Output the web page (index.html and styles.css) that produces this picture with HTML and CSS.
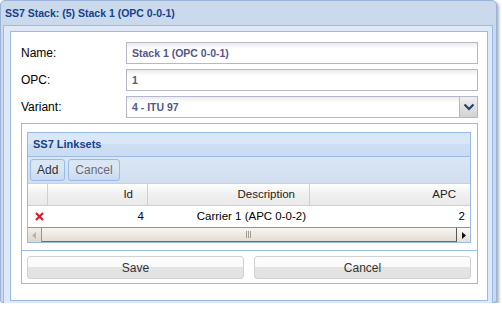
FILE: index.html
```html
<!DOCTYPE html>
<html lang="en">
<head>
  <meta charset="UTF-8">
  <title>SS7 Stack</title>
  <link rel="stylesheet" href="styles.css">
</head>
<body>
  <!-- Window -->
  <div class="window">
    <div class="window-header">SS7 Stack: (5) Stack 1 (OPC 0-0-1)</div>
    <div class="window-body">
      <div class="form-panel">
        <div class="form-row">
          <label class="form-label">Name:</label>
          <div class="field">Stack 1 (OPC 0-0-1)</div>
        </div>
        <div class="form-row">
          <label class="form-label">OPC:</label>
          <div class="field">1</div>
        </div>
        <div class="form-row">
          <label class="form-label">Variant:</label>
          <div class="field combo">
            <span class="combo-text">4 - ITU 97</span>
            <span class="combo-trigger">
              <svg width="12" height="8" viewBox="0 0 12 8"><path d="M1.5 1.5 L6 6 L10.5 1.5" fill="none" stroke="#24406e" stroke-width="2.2"/></svg>
            </span>
          </div>
        </div>

        <!-- Linksets box -->
        <div class="box">
          <div class="box-body">
            <div class="grid">
              <div class="grid-title">SS7 Linksets</div>
              <div class="grid-toolbar">
                <button class="tb-btn">Add</button>
                <button class="tb-btn disabled">Cancel</button>
              </div>
              <div class="grid-head">
                <div class="col col-icon"></div>
                <div class="col col-id">Id</div>
                <div class="col col-desc">Description</div>
                <div class="col col-apc">APC</div>
              </div>
              <div class="grid-row">
                <div class="cell col-icon">
                  <svg class="del" width="9" height="9" viewBox="0 0 9 9"><path d="M1 1 L8 8 M8 1 L1 8" stroke="#d4202a" stroke-width="2.2"/></svg>
                </div>
                <div class="cell col-id">4</div>
                <div class="cell col-desc">Carrier 1 (APC 0-0-2)</div>
                <div class="cell col-apc">2</div>
              </div>
              <div class="hscroll">
                <span class="sb-btn"><svg width="5" height="7" viewBox="0 0 5 7"><path d="M4 0 L0 3.5 L4 7 Z" fill="#b8b4ac"/></svg></span>
                <span class="sb-thumb"><span class="grip"></span></span>
                <span class="sb-btn right"><svg width="5" height="7" viewBox="0 0 5 7"><path d="M1 0 L5 3.5 L1 7 Z" fill="#111"/></svg></span>
              </div>
            </div>
          </div>
          <div class="box-foot">
            <button class="btn">Save</button>
            <button class="btn">Cancel</button>
          </div>
        </div>
      </div>
    </div>
  </div>
</body>
</html>
```

FILE: styles.css
```css
/* Global */
body {
  margin: 0;
  padding: 0;
  background: #fff;
  font-family: 'Liberation Sans', Arial, sans-serif;
  font-size: 12px;
}

/* Window frame */
.window {
  width: 495px;
  height: 301px;
  border: 1px solid #99b4d6;
  border-radius: 5px 5px 3px 3px;
  background: #cad9ec;
  box-shadow: 2px 2px 3px rgba(0, 0, 0, 0.3);
  display: flex;
  flex-direction: column;
}

.window-header {
  height: 24px;
  line-height: 25px;
  padding-left: 4px;
  font-weight: bold;
  font-size: 10.5px;
  color: #15428b;
}

.window-body {
  margin: 0 3px 2px 2px;
  border: 1px solid #99bbe8;
  background: #dfe8f6;
  padding: 5px 4px 6px 6px;
  flex: 1;
}

/* Form */
.form-panel {
  height: 258px;
  border: 1px solid #99bbe8;
  background: #fff;
  padding: 10px 9px 0 10px;
}

.form-row {
  display: flex;
  align-items: center;
  margin-bottom: 5px;
}

.form-label {
  width: 105px;
  color: #000;
  font-size: 12px;
}

.field {
  flex: 1;
  height: 20px;
  line-height: 20px;
  border: 1px solid #b5b8c8;
  padding-left: 5px;
  color: #55558a;
  font-size: 10.5px;
  font-weight: bold;
  background: linear-gradient(#ececec, #fff 6px);
}

.combo {
  display: flex;
  padding-right: 0;
}

.combo-text {
  flex: 1;
}

.combo-trigger {
  width: 17px;
  height: 20px;
  border-left: 1px solid #b5b8c8;
  background: linear-gradient(#f0f0f0, #d2d2d2);
  display: flex;
  align-items: center;
  justify-content: center;
}

/* Linksets box */
.box {
  border: 1px solid #99bbe8;
}

.box-body {
  padding: 8px 6px 7px 5px;
}

.grid {
  border: 1px solid #99bbe8;
  font-size: 11.5px;
}

.grid-title {
  height: 23px;
  line-height: 23px;
  padding-left: 5px;
  font-size: 11px;
  font-weight: bold;
  color: #15428b;
  background: linear-gradient(#dae7f6 45%, #cddef3 50%, #cbdcf2);
  border-bottom: 1px solid #99bbe8;
}

.grid-toolbar {
  height: 26px;
  display: flex;
  align-items: center;
  gap: 3px;
  padding-left: 2px;
  background: linear-gradient(#dae6f4, #d0def0);
}

.tb-btn {
  height: 22px;
  padding: 0 6px;
  border: 1px solid #99bbe8;
  border-radius: 3px;
  background: linear-gradient(#dbe6f4 40%, #c8daf2);
  font-family: 'Liberation Sans', Arial, sans-serif;
  font-size: 12px;
  color: #333;
}

.tb-btn.disabled {
  color: #6d6d6d;
}

.grid-head,
.grid-row {
  display: flex;
}

.grid-head {
  height: 21px;
  line-height: 21px;
  background: linear-gradient(#fff, #f0f0f0 50%, #e9e9e9);
  border-top: 1px solid #d0d0d0;
  border-bottom: 1px solid #d0d0d0;
  color: #222;
}

.col,
.cell {
  box-sizing: border-box;
  text-align: right;
}

.col {
  border-right: 1px solid #d0d0d0;
  padding-right: 14px;
}

.col-icon { width: 20px; text-align: left; }
.col-id { width: 100px; }
.col-desc { width: 162px; }
.col-apc { flex: 1; }
.grid-head .col-apc { border-right: 0; }

.grid-row {
  height: 21px;
  line-height: 21px;
  background: #fff;
  color: #000;
}

.cell { padding-right: 4px; }
.grid-row .col-apc { padding-right: 5px; }

.del {
  margin-left: 7px;
  vertical-align: -1px;
}

/* Scrollbar */
.hscroll {
  height: 14px;
  display: flex;
  border-top: 1px solid #9a9387;
  background: #ede9e3;
}

.sb-btn {
  width: 14px;
  height: 14px;
  box-sizing: border-box;
  border-right: 1px solid #9a9387;
  background: linear-gradient(#f1eee9, #dcd6cc);
  display: flex;
  align-items: center;
  justify-content: center;
}

.sb-btn.right {
  border-right: 0;
  border-left: 1px solid #5a5650;
  background: linear-gradient(#fbfaf8, #e4dfd7);
}

.sb-thumb {
  flex: 1;
  background: linear-gradient(#f7f5f2, #e3ddd4);
  display: flex;
  align-items: center;
  justify-content: center;
  border-bottom: 1px solid #6e6a62;
}

.grip {
  width: 6px;
  height: 7px;
  background: repeating-linear-gradient(90deg, #a49d92 0 1px, transparent 1px 2px);
}

/* Footer buttons */
.box-foot {
  border-top: 1px solid #99bbe8;
  padding: 5px 6px 4px 5px;
  display: flex;
  gap: 10px;
}

.btn {
  flex: 1;
  height: 23px;
  border: 1px solid #d2d2d2;
  border-radius: 3px;
  background: linear-gradient(#fbfbfb 45%, #e4e4e4 50%, #e2e2e2);
  font-family: 'Liberation Sans', Arial, sans-serif;
  font-size: 12px;
  color: #333;
}
```
